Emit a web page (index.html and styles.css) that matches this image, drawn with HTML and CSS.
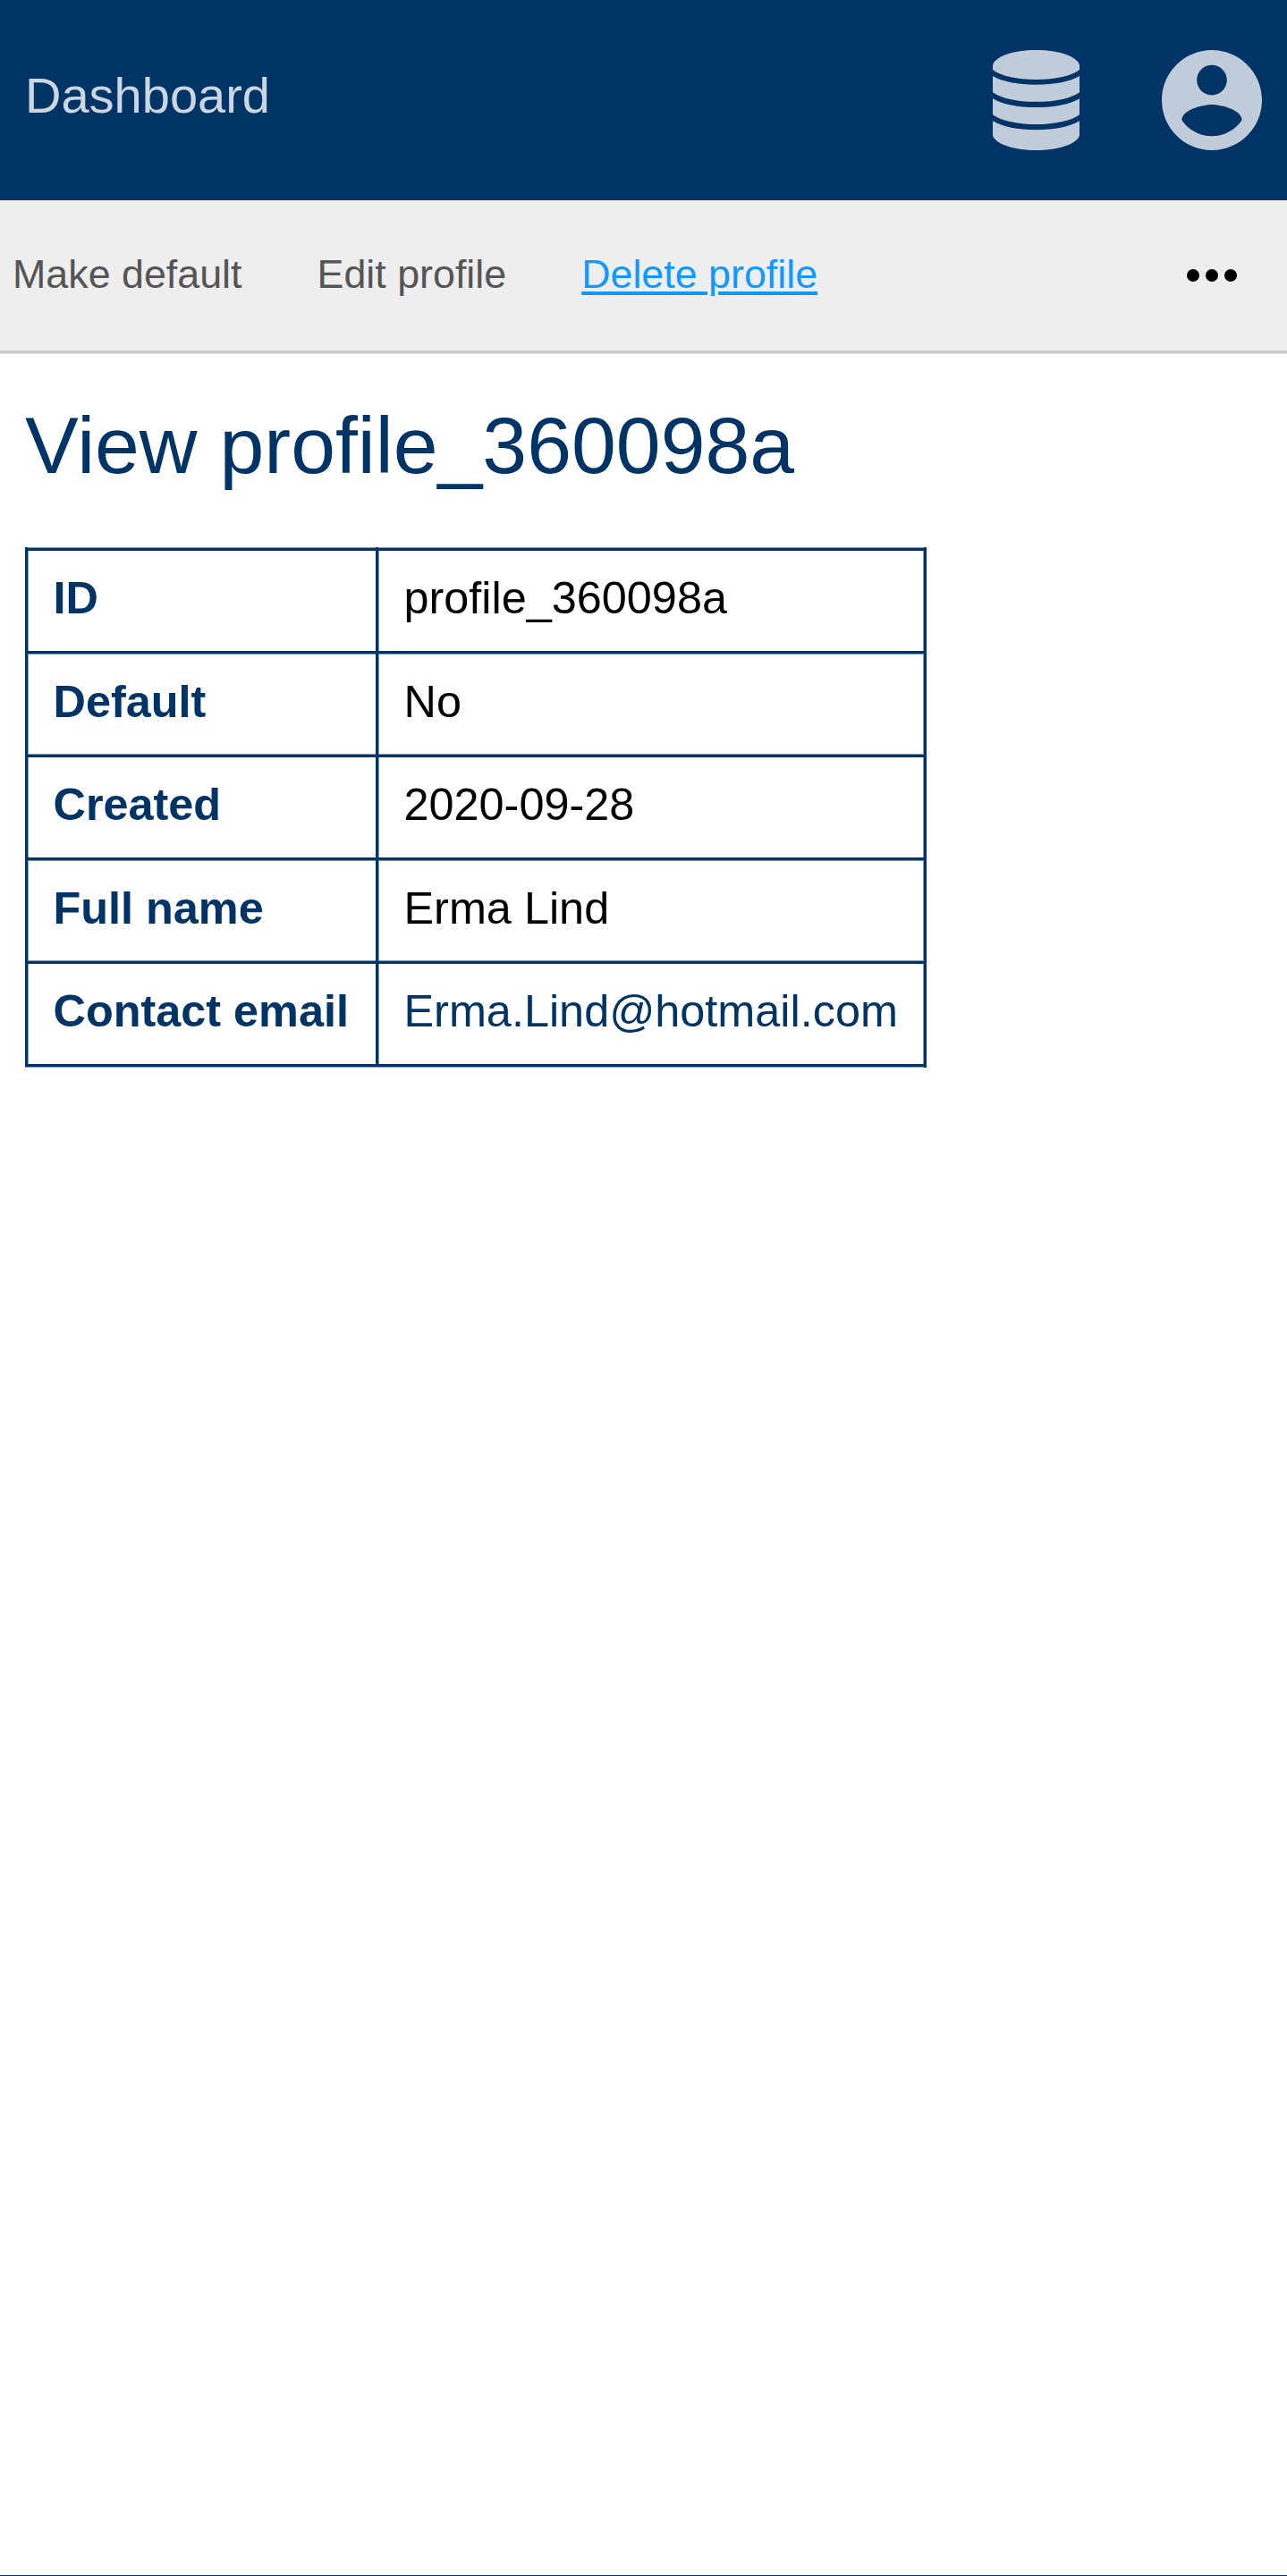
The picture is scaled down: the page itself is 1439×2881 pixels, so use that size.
FILE: index.html
```html
<!DOCTYPE html>
<html lang="en">
<head>
<meta charset="utf-8">
<title>View profile_360098a</title>
<link rel="stylesheet" href="styles.css">
</head>
<body>
<div class="page">
  <header class="header">
    <a class="brand">Dashboard</a>
    <div class="header-icons">
      <svg class="icon-database" viewBox="0 0 290 335" preserveAspectRatio="none" aria-hidden="true">
        <path d="M0 50C8 22 66 0 145 0S282 22 290 50V66C265 86 210 99 145 99S25 86 0 66Z"/>
        <path d="M0 87C32 106 84 116 145 116S258 106 290 87V141C265 160 210 173 145 173S25 160 0 141Z"/>
        <path d="M0 162C32 181 84 191.500 145 191.500S258 181 290 162V216C265 235 210 248.500 145 248.500S25 235 0 216Z"/>
        <path d="M0 237C32 256 84 267 145 267S258 256 290 237V285C284 313 222 335 145 335S6 313 0 285Z"/>
      </svg>
      <svg class="icon-account" viewBox="2 2 20 20" aria-hidden="true">
        <path d="M12 2C6.480 2 2 6.480 2 12s4.480 10 10 10 10-4.480 10-10S17.520 2 12 2zm0 3c1.660 0 3 1.340 3 3s-1.340 3-3 3-3-1.340-3-3 1.340-3 3-3zm0 14.200c-2.500 0-4.710-1.280-6-3.220.03-1.990 4-3.080 6-3.080 1.990 0 5.970 1.090 6 3.080-1.290 1.940-3.500 3.220-6 3.220z"/>
      </svg>
    </div>
  </header>
  <nav class="subnav">
    <div class="subnav-links">
      <a>Make default</a>
      <a>Edit profile</a>
      <a class="active">Delete profile</a>
    </div>
    <svg class="icon-more" viewBox="0 0 56 14" aria-hidden="true">
      <circle cx="7" cy="7" r="7"/><circle cx="28" cy="7" r="7"/><circle cx="49" cy="7" r="7"/>
    </svg>
  </nav>
  <main class="content">
    <h1>View profile_360098a</h1>
    <table class="details">
      <tr><th>ID</th><td>profile_360098a</td></tr>
      <tr><th>Default</th><td>No</td></tr>
      <tr><th>Created</th><td>2020-09-28</td></tr>
      <tr><th>Full name</th><td>Erma Lind</td></tr>
      <tr><th>Contact email</th><td><a>Erma.Lind@hotmail.com</a></td></tr>
    </table>
  </main>
</div>
</body>
</html>
```

FILE: styles.css
```css
:root {
  --navy: #003366;
  --navy-soft: #7f99b2;
}

* {
  box-sizing: border-box;
}

body {
  margin: 0;
  background: var(--navy);
  font-family: "Liberation Sans", Arial, sans-serif;
}

.page {
  height: 2880px;
  background: #fff;
}

.header {
  display: flex;
  justify-content: space-between;
  height: 224px;
  padding: 56px 28px 0;
  background: var(--navy);
}

.brand {
  padding-top: 19px;
  color: #ccd6e0;
  font-size: 56px;
  line-height: 63px;
}

.header-icons {
  display: flex;
  gap: 92px;
  fill: #c0ccd9;
}

.icon-database {
  width: 97px;
  height: 112px;
}

.icon-account {
  width: 112px;
  height: 112px;
}

.subnav {
  display: flex;
  align-items: flex-start;
  justify-content: space-between;
  height: 172px;
  padding: 57px 56px 0 14px;
  background: linear-gradient(to top, #e5e5e5 1px, #ccc 1px 4px, #eee 4px);
}

.subnav-links {
  display: flex;
  gap: 84px;
  color: #555;
  font-size: 44.8px;
  line-height: 50px;
}

.active {
  color: #1199ff;
  text-decoration: underline 3.5px;
  text-underline-offset: 3.5px;
}

.icon-more {
  width: 56px;
  height: 14px;
  margin-top: 20px;
}

.content {
  padding: 52px 28px 0;
  color: var(--navy);
}

h1 {
  margin: 0 0 64px;
  font-size: 89.6px;
  font-weight: 400;
  line-height: 100px;
}

/* 3.5px rules: three solid pixels plus one softened pixel */
.details {
  width: 1008px;
  padding: 0 3px 4px 0;
  border-spacing: 0;
  table-layout: fixed;
  background:
    linear-gradient(to left, var(--navy) 3px, transparent 3px),
    linear-gradient(to top, var(--navy-soft) 1px, var(--navy) 1px 4px, transparent 4px);
  font-size: 50.4px;
  line-height: 57px;
}

.details th,
.details td {
  --rule: linear-gradient(var(--navy-soft) 1px, var(--navy) 1px 4px, transparent 4px);
  --end: linear-gradient(transparent, transparent);
  height: 116px;
  padding: 28px 0 0 31.5px;
  background:
    linear-gradient(to right, var(--navy) 3px, transparent 3px),
    var(--rule),
    linear-gradient(to right, transparent 3px, var(--navy-soft) 3px 4px, transparent 4px),
    var(--end);
  text-align: left;
  vertical-align: top;
}

.details tr:nth-child(even) > * {
  --rule: linear-gradient(var(--navy) 3px, var(--navy-soft) 3px 4px, transparent 4px);
  height: 115px;
}

.details th {
  width: 392px;
}

.details td {
  --end: linear-gradient(to left, var(--navy-soft) 1px, transparent 1px);
  color: #000;
}

.details a {
  color: var(--navy);
}
```
